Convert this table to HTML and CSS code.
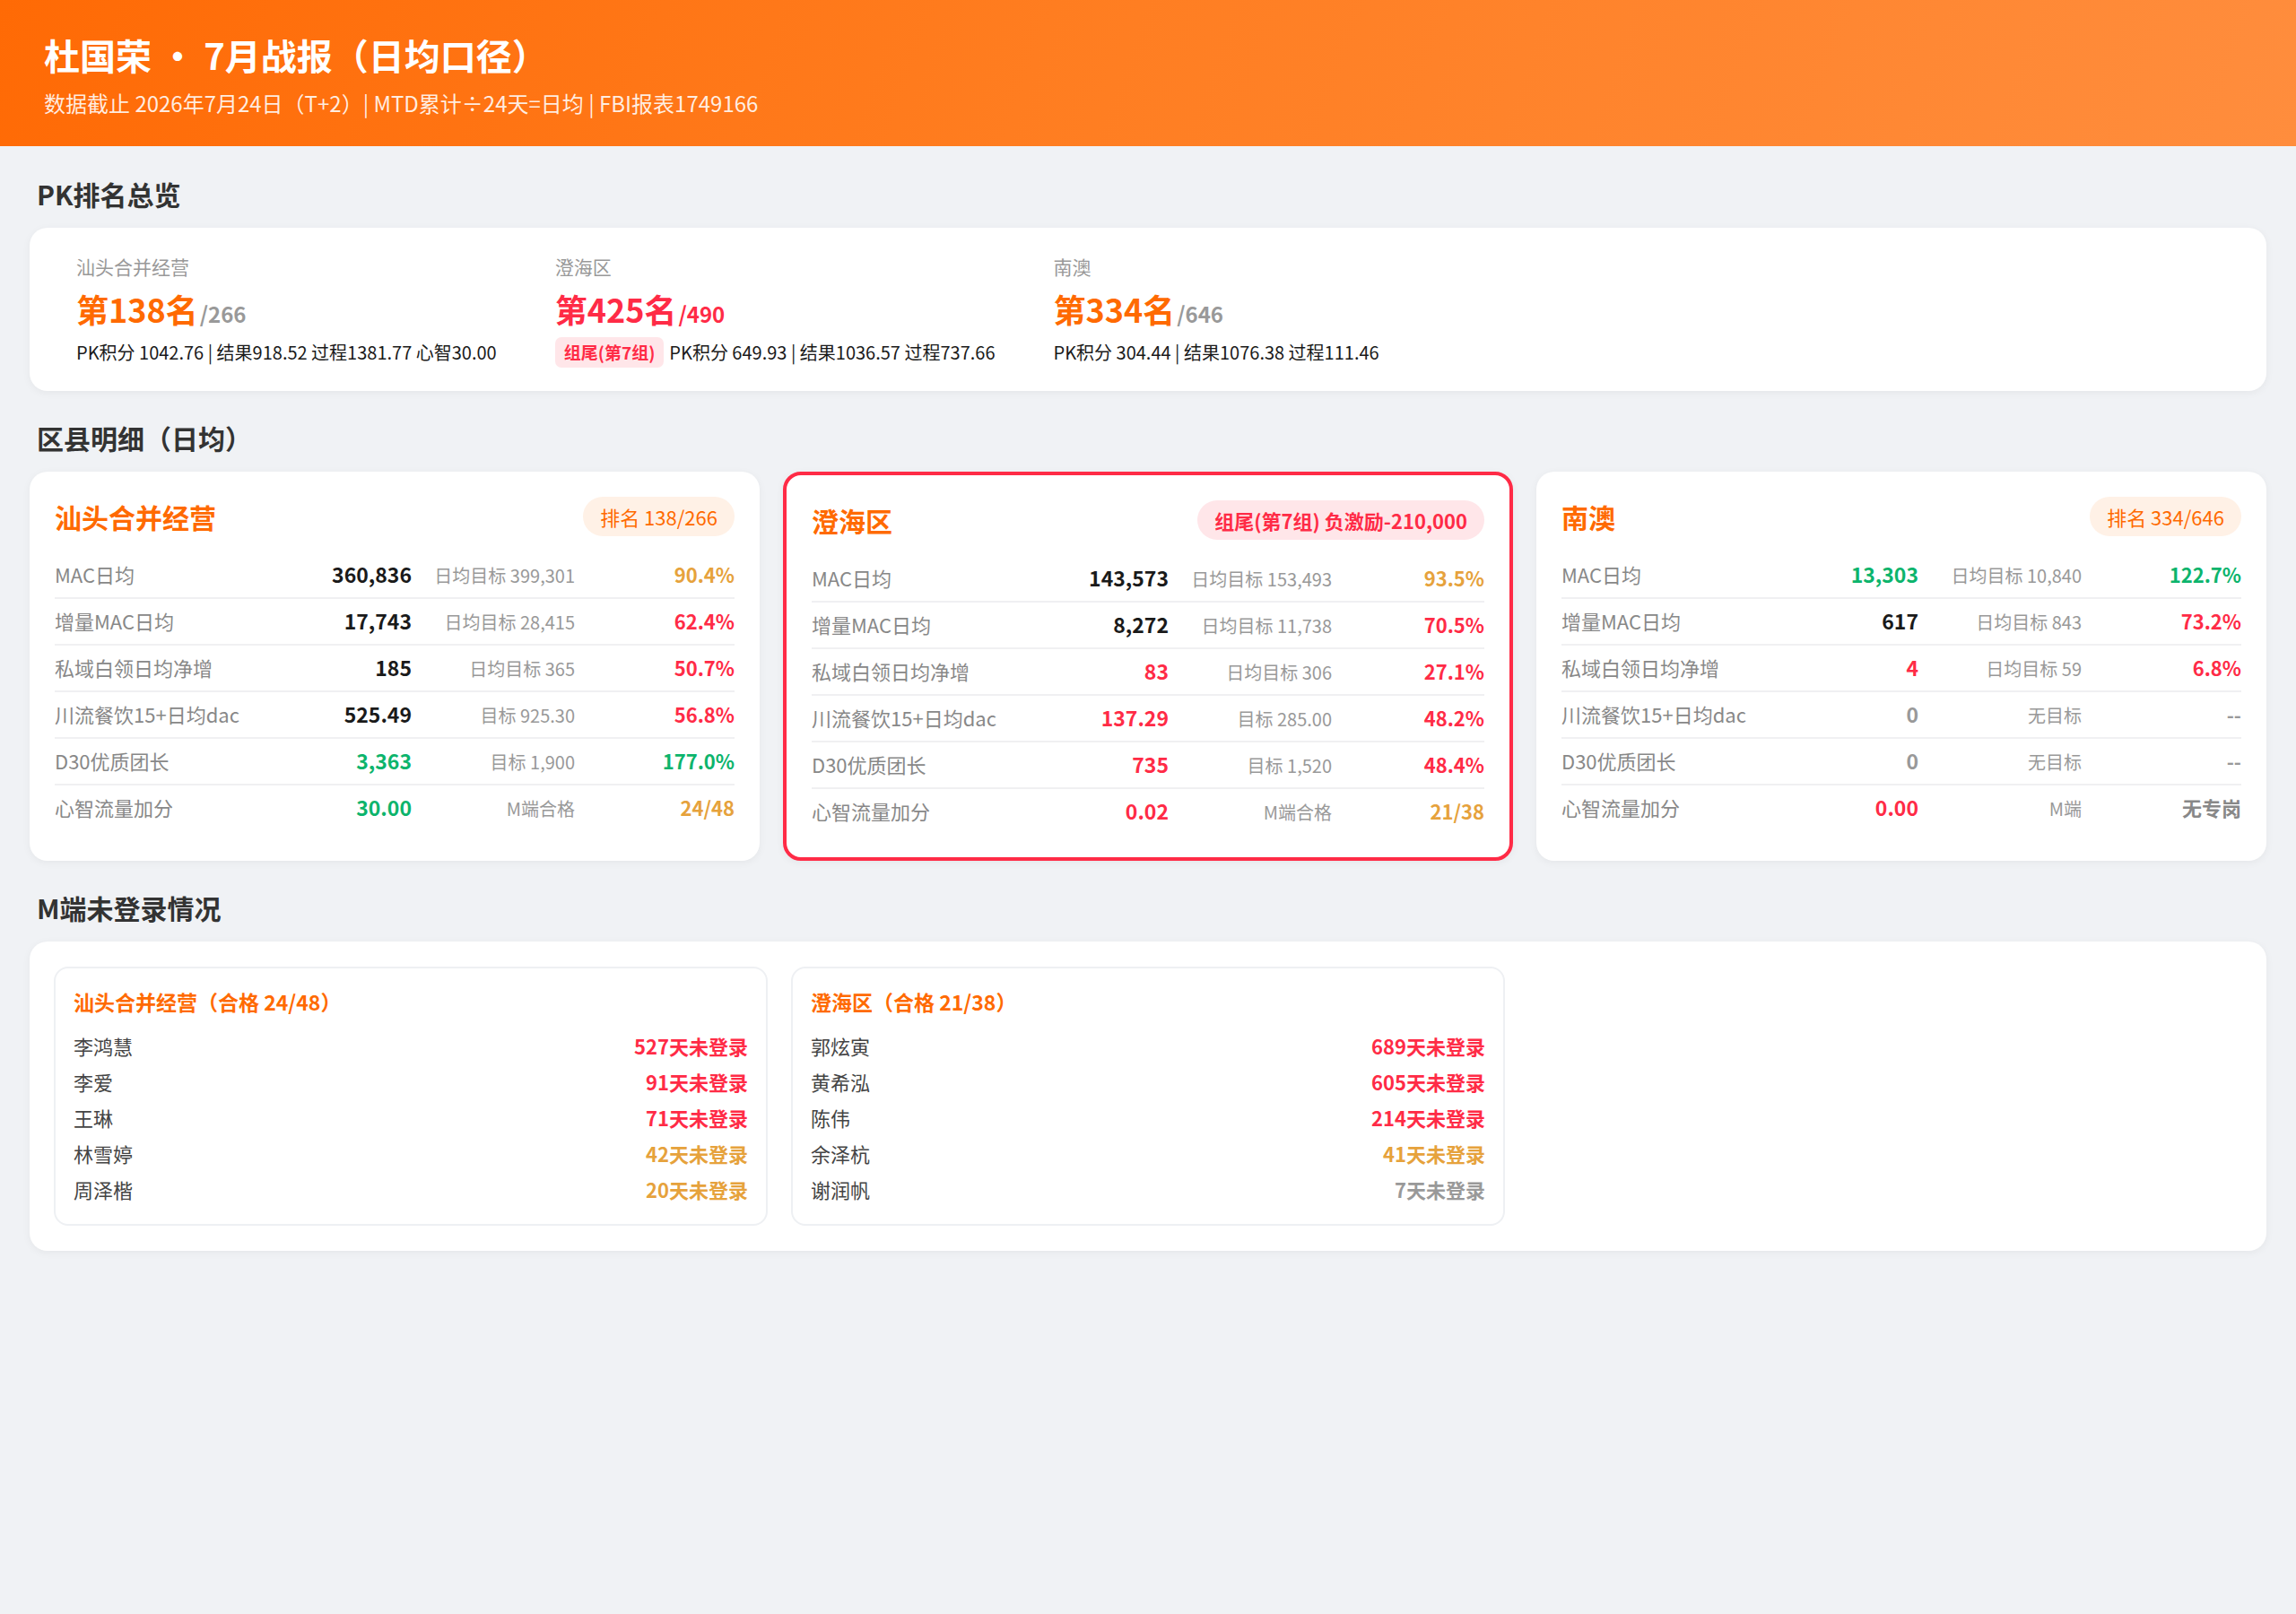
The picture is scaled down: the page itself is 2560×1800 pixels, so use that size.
FILE: index.html
```html
<!DOCTYPE html>
<html lang="zh-CN">
<head>
<meta charset="utf-8">
<title>杜国荣 · 7月战报（日均口径）</title>
<link rel="stylesheet" href="styles.css">
</head>
<body>
<header class="header">
  <h1 class="header-title">杜国荣 · 7月战报（日均口径）</h1>
  <div class="header-sub">数据截止 2026年7月24日（T+2）| MTD累计÷24天=日均 | FBI报表1749166</div>
</header>

<main class="page">
  <h2 class="section-title">PK排名总览</h2>
  <section class="card pk-card">
    <div class="pk-item">
      <div class="pk-name">汕头合并经营</div>
      <div class="pk-rank"><span class="rank-main orange">第138名</span><span class="rank-total">/266</span></div>
      <div class="pk-line"><span class="pk-text">PK积分 1042.76 | 结果918.52 过程1381.77 心智30.00</span></div>
    </div>
    <div class="pk-item">
      <div class="pk-name">澄海区</div>
      <div class="pk-rank"><span class="rank-main red">第425名</span><span class="rank-total red">/490</span></div>
      <div class="pk-line"><span class="pk-tag">组尾(第7组)</span><span class="pk-text">PK积分 649.93 | 结果1036.57 过程737.66</span></div>
    </div>
    <div class="pk-item">
      <div class="pk-name">南澳</div>
      <div class="pk-rank"><span class="rank-main orange">第334名</span><span class="rank-total">/646</span></div>
      <div class="pk-line"><span class="pk-text">PK积分 304.44 | 结果1076.38 过程111.46</span></div>
    </div>
  </section>

  <h2 class="section-title spaced">区县明细（日均）</h2>
  <section class="detail-grid">
    <div class="card dcard">
      <div class="dhead">
        <div class="dtitle">汕头合并经营</div>
        <div class="dbadge">排名 138/266</div>
      </div>
      <div class="drow"><span class="dl">MAC日均</span><span class="dv dark">360,836</span><span class="dt">日均目标 399,301</span><span class="dp amber">90.4%</span></div>
      <div class="drow"><span class="dl">增量MAC日均</span><span class="dv dark">17,743</span><span class="dt">日均目标 28,415</span><span class="dp red">62.4%</span></div>
      <div class="drow"><span class="dl">私域白领日均净增</span><span class="dv dark">185</span><span class="dt">日均目标 365</span><span class="dp red">50.7%</span></div>
      <div class="drow"><span class="dl">川流餐饮15+日均dac</span><span class="dv dark">525.49</span><span class="dt">目标 925.30</span><span class="dp red">56.8%</span></div>
      <div class="drow"><span class="dl">D30优质团长</span><span class="dv green">3,363</span><span class="dt">目标 1,900</span><span class="dp green">177.0%</span></div>
      <div class="drow"><span class="dl">心智流量加分</span><span class="dv green">30.00</span><span class="dt">M端合格</span><span class="dp amber">24/48</span></div>
    </div>

    <div class="card dcard alert">
      <div class="dhead">
        <div class="dtitle">澄海区</div>
        <div class="dbadge danger">组尾(第7组) 负激励-210,000</div>
      </div>
      <div class="drow"><span class="dl">MAC日均</span><span class="dv dark">143,573</span><span class="dt">日均目标 153,493</span><span class="dp amber">93.5%</span></div>
      <div class="drow"><span class="dl">增量MAC日均</span><span class="dv dark">8,272</span><span class="dt">日均目标 11,738</span><span class="dp red">70.5%</span></div>
      <div class="drow"><span class="dl">私域白领日均净增</span><span class="dv red">83</span><span class="dt">日均目标 306</span><span class="dp red">27.1%</span></div>
      <div class="drow"><span class="dl">川流餐饮15+日均dac</span><span class="dv red">137.29</span><span class="dt">目标 285.00</span><span class="dp red">48.2%</span></div>
      <div class="drow"><span class="dl">D30优质团长</span><span class="dv red">735</span><span class="dt">目标 1,520</span><span class="dp red">48.4%</span></div>
      <div class="drow"><span class="dl">心智流量加分</span><span class="dv red">0.02</span><span class="dt">M端合格</span><span class="dp amber">21/38</span></div>
    </div>

    <div class="card dcard">
      <div class="dhead">
        <div class="dtitle">南澳</div>
        <div class="dbadge">排名 334/646</div>
      </div>
      <div class="drow"><span class="dl">MAC日均</span><span class="dv green">13,303</span><span class="dt">日均目标 10,840</span><span class="dp green">122.7%</span></div>
      <div class="drow"><span class="dl">增量MAC日均</span><span class="dv dark">617</span><span class="dt">日均目标 843</span><span class="dp red">73.2%</span></div>
      <div class="drow"><span class="dl">私域白领日均净增</span><span class="dv red">4</span><span class="dt">日均目标 59</span><span class="dp red">6.8%</span></div>
      <div class="drow"><span class="dl">川流餐饮15+日均dac</span><span class="dv grey">0</span><span class="dt">无目标</span><span class="dp grey">--</span></div>
      <div class="drow"><span class="dl">D30优质团长</span><span class="dv grey">0</span><span class="dt">无目标</span><span class="dp grey">--</span></div>
      <div class="drow"><span class="dl">心智流量加分</span><span class="dv red">0.00</span><span class="dt">M端</span><span class="dp muted">无专岗</span></div>
    </div>
  </section>

  <h2 class="section-title spaced">M端未登录情况</h2>
  <section class="card login-card">
    <div class="login-box">
      <div class="login-title">汕头合并经营（合格 24/48）</div>
      <div class="login-row"><span class="ln">李鸿慧</span><span class="ld red">527天未登录</span></div>
      <div class="login-row"><span class="ln">李爱</span><span class="ld red">91天未登录</span></div>
      <div class="login-row"><span class="ln">王琳</span><span class="ld red">71天未登录</span></div>
      <div class="login-row"><span class="ln">林雪婷</span><span class="ld amber">42天未登录</span></div>
      <div class="login-row"><span class="ln">周泽楷</span><span class="ld amber">20天未登录</span></div>
    </div>
    <div class="login-box">
      <div class="login-title">澄海区（合格 21/38）</div>
      <div class="login-row"><span class="ln">郭炫寅</span><span class="ld red">689天未登录</span></div>
      <div class="login-row"><span class="ln">黄希泓</span><span class="ld red">605天未登录</span></div>
      <div class="login-row"><span class="ln">陈伟</span><span class="ld red">214天未登录</span></div>
      <div class="login-row"><span class="ln">余泽杭</span><span class="ld amber">41天未登录</span></div>
      <div class="login-row"><span class="ln">谢润帆</span><span class="ld grey">7天未登录</span></div>
    </div>
  </section>
</main>
</body>
</html>
```

FILE: styles.css
```css
* { box-sizing: border-box; }

html, body {
  margin: 0;
  padding: 0;
}

body {
  background: #f0f2f5;
  font-family: "Noto Sans CJK SC", "Noto Sans", sans-serif;
  color: #222;
}

.header {
  height: 163px;
  padding: 35px 49px 0;
  background: linear-gradient(110deg, #ff6a05 0%, #ff7d20 45%, #ff8d3d 100%);
  color: #fff;
}

.header-title {
  margin: 0;
  font-size: 40px;
  line-height: 52px;
  font-weight: 700;
}

.header-sub {
  margin-top: 12px;
  font-size: 24px;
  line-height: 32px;
  color: rgba(255, 255, 255, 0.88);
}

.page {
  padding: 33px 33px 40px;
}

.section-title {
  margin: 0 0 18px;
  padding-left: 8px;
  font-size: 30px;
  line-height: 40px;
  font-weight: 700;
  color: #333;
}

.section-title.spaced {
  margin-top: 32px;
}

.card {
  background: #fff;
  border-radius: 20px;
  box-shadow: 0 2px 10px rgba(0, 0, 0, 0.05);
}

/* PK overview */
.pk-card {
  display: flex;
  gap: 65px;
  padding: 28px 52px 26px;
}

.pk-name {
  font-size: 21px;
  line-height: 30px;
  color: #999;
}

.pk-rank {
  margin-top: 9px;
  line-height: 46px;
  height: 46px;
}

.rank-main {
  font-size: 36px;
  font-weight: 700;
}

.rank-total {
  margin-left: 2px;
  font-size: 24px;
  font-weight: 700;
  color: #999;
}

.rank-total.red { color: #ff2b46; }

.pk-line {
  margin-top: 9px;
  height: 34px;
  display: flex;
  align-items: center;
  gap: 6px;
}

.pk-text {
  font-size: 20px;
  line-height: 34px;
  color: #1a1a1a;
}

.pk-tag {
  height: 34px;
  line-height: 34px;
  padding: 0 10px;
  border-radius: 7px;
  background: #ffe6e9;
  color: #ff2b46;
  font-size: 19px;
  font-weight: 700;
}

/* detail cards */
.detail-grid {
  display: grid;
  grid-template-columns: repeat(3, 1fr);
  gap: 26px;
}

.dcard {
  padding: 28px 28px 24px;
  border: 0 solid transparent;
}

.dcard.alert {
  border: 4px solid #ff2b46;
}

.dhead {
  display: flex;
  align-items: center;
  justify-content: space-between;
  height: 44px;
  margin-bottom: 18px;
}

.dtitle {
  font-size: 30px;
  font-weight: 700;
  color: #ff6a00;
  line-height: 44px;
}

.dbadge {
  height: 44px;
  line-height: 44px;
  padding: 0 19px;
  border-radius: 22px;
  background: #fff1e6;
  color: #ff6a00;
  font-size: 22px;
}

.dbadge.danger {
  background: #ffe6e9;
  color: #ff2b46;
  font-weight: 700;
}

.drow {
  display: grid;
  grid-template-columns: 260px 138px 182px 1fr;
  align-items: baseline;
  height: 52px;
  padding-top: 10px;
  border-bottom: 2px solid #f0f0f2;
}

.drow:last-child {
  border-bottom: 0;
}

.dl {
  font-size: 22px;
  line-height: 28px;
  color: #888;
  white-space: nowrap;
}

.dv {
  font-size: 23px;
  line-height: 28px;
  font-weight: 700;
  text-align: right;
}

.dt {
  font-size: 20px;
  line-height: 28px;
  color: #999;
  text-align: right;
}

.dp {
  font-size: 22px;
  line-height: 28px;
  font-weight: 700;
  text-align: right;
}

/* colours */
.orange { color: #ff6a00; }
.red { color: #ff2b46; }
.amber { color: #e6a23c; }
.green { color: #0cb46c; }
.dark { color: #1a1a1a; }
.grey { color: #999; }
.muted { color: #888; }

/* login section */
.login-card {
  display: grid;
  grid-template-columns: repeat(3, 1fr);
  gap: 26px;
  padding: 28px 27px;
}

.login-box {
  border: 2px solid #eef0f3;
  border-radius: 16px;
  padding: 20px 20px 19px;
}

.login-title {
  font-size: 23px;
  line-height: 34px;
  font-weight: 700;
  color: #ff6a00;
  margin-bottom: 12px;
}

.login-row {
  display: flex;
  justify-content: space-between;
  align-items: baseline;
  line-height: 40px;
  font-size: 22px;
}

.ln {
  color: #444;
}

.ld {
  font-weight: 700;
}
```
